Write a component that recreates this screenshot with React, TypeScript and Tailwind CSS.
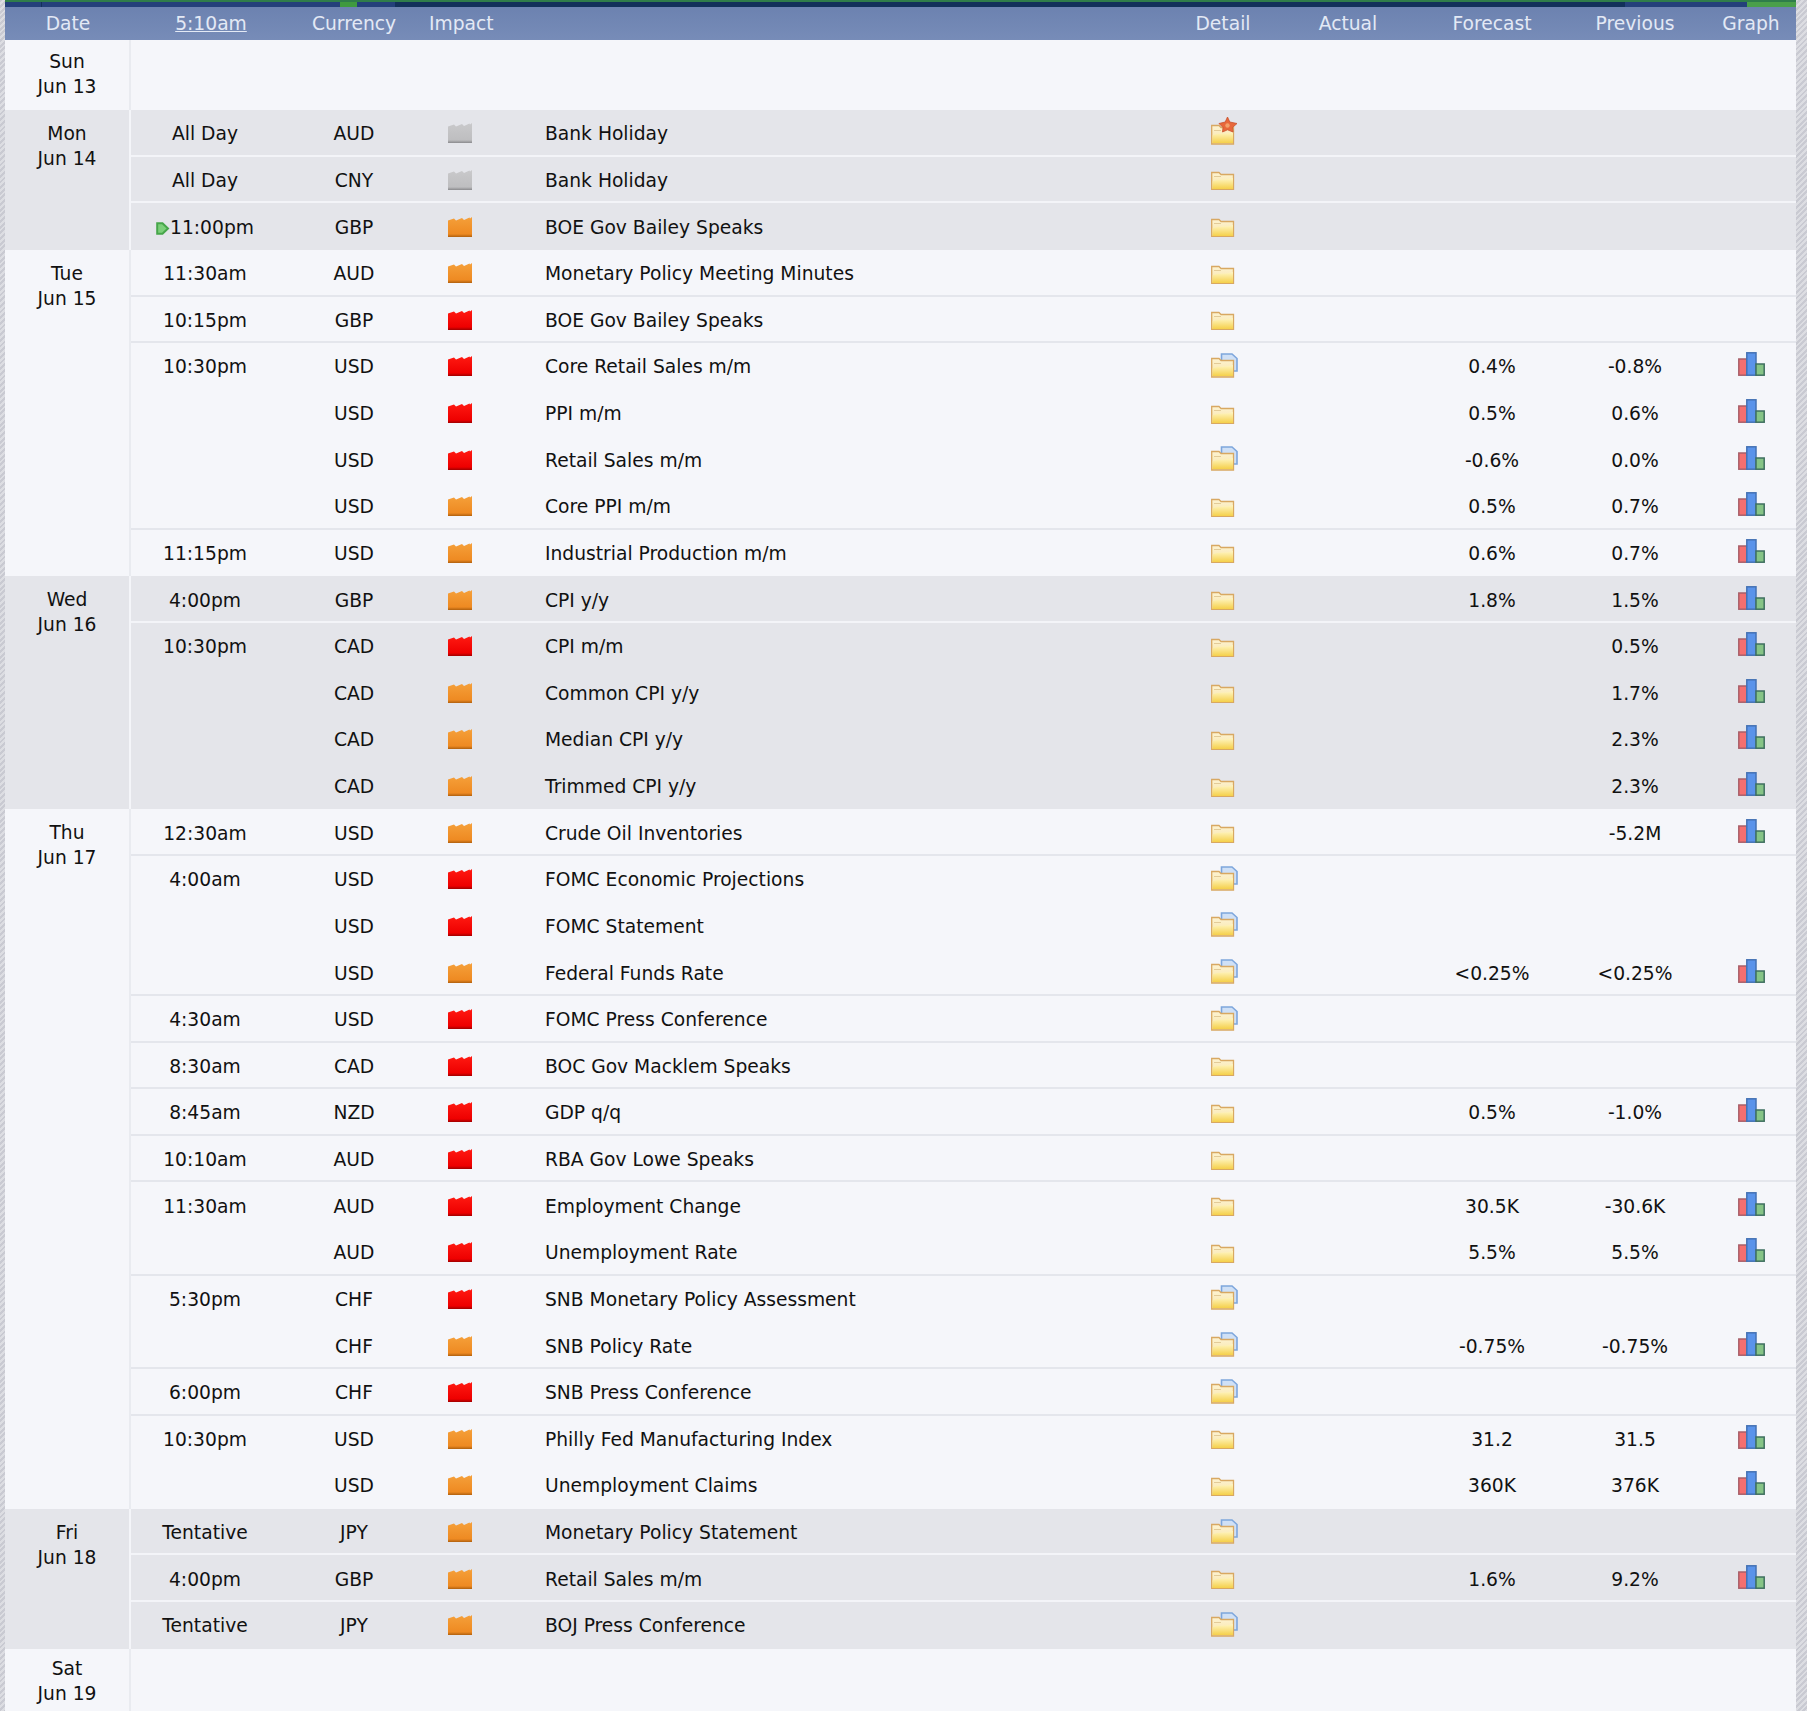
import React from 'react';

type Row = {
  time?: string;
  cur: string;
  impact: 'gray' | 'orange' | 'red';
  event: string;
  detail?: 'plain' | 'doc' | 'star';
  forecast?: string;
  previous?: string;
  graph?: boolean;
  next?: boolean;
};

type Day = { name: string; date: string; shaded: boolean; rows: Row[] };

const days: Day[] = [
  { name: 'Sun', date: 'Jun 13', shaded: false, rows: [] },
  {
    name: 'Mon',
    date: 'Jun 14',
    shaded: true,
    rows: [
      { time: 'All Day', cur: 'AUD', impact: 'gray', event: 'Bank Holiday', detail: 'star' },
      { time: 'All Day', cur: 'CNY', impact: 'gray', event: 'Bank Holiday' },
      { time: '11:00pm', next: true, cur: 'GBP', impact: 'orange', event: 'BOE Gov Bailey Speaks' },
    ],
  },
  {
    name: 'Tue',
    date: 'Jun 15',
    shaded: false,
    rows: [
      { time: '11:30am', cur: 'AUD', impact: 'orange', event: 'Monetary Policy Meeting Minutes' },
      { time: '10:15pm', cur: 'GBP', impact: 'red', event: 'BOE Gov Bailey Speaks' },
      { time: '10:30pm', cur: 'USD', impact: 'red', event: 'Core Retail Sales m/m', detail: 'doc', forecast: '0.4%', previous: '-0.8%', graph: true },
      { cur: 'USD', impact: 'red', event: 'PPI m/m', forecast: '0.5%', previous: '0.6%', graph: true },
      { cur: 'USD', impact: 'red', event: 'Retail Sales m/m', detail: 'doc', forecast: '-0.6%', previous: '0.0%', graph: true },
      { cur: 'USD', impact: 'orange', event: 'Core PPI m/m', forecast: '0.5%', previous: '0.7%', graph: true },
      { time: '11:15pm', cur: 'USD', impact: 'orange', event: 'Industrial Production m/m', forecast: '0.6%', previous: '0.7%', graph: true },
    ],
  },
  {
    name: 'Wed',
    date: 'Jun 16',
    shaded: true,
    rows: [
      { time: '4:00pm', cur: 'GBP', impact: 'orange', event: 'CPI y/y', forecast: '1.8%', previous: '1.5%', graph: true },
      { time: '10:30pm', cur: 'CAD', impact: 'red', event: 'CPI m/m', previous: '0.5%', graph: true },
      { cur: 'CAD', impact: 'orange', event: 'Common CPI y/y', previous: '1.7%', graph: true },
      { cur: 'CAD', impact: 'orange', event: 'Median CPI y/y', previous: '2.3%', graph: true },
      { cur: 'CAD', impact: 'orange', event: 'Trimmed CPI y/y', previous: '2.3%', graph: true },
    ],
  },
  {
    name: 'Thu',
    date: 'Jun 17',
    shaded: false,
    rows: [
      { time: '12:30am', cur: 'USD', impact: 'orange', event: 'Crude Oil Inventories', previous: '-5.2M', graph: true },
      { time: '4:00am', cur: 'USD', impact: 'red', event: 'FOMC Economic Projections', detail: 'doc' },
      { cur: 'USD', impact: 'red', event: 'FOMC Statement', detail: 'doc' },
      { cur: 'USD', impact: 'orange', event: 'Federal Funds Rate', detail: 'doc', forecast: '<0.25%', previous: '<0.25%', graph: true },
      { time: '4:30am', cur: 'USD', impact: 'red', event: 'FOMC Press Conference', detail: 'doc' },
      { time: '8:30am', cur: 'CAD', impact: 'red', event: 'BOC Gov Macklem Speaks' },
      { time: '8:45am', cur: 'NZD', impact: 'red', event: 'GDP q/q', forecast: '0.5%', previous: '-1.0%', graph: true },
      { time: '10:10am', cur: 'AUD', impact: 'red', event: 'RBA Gov Lowe Speaks' },
      { time: '11:30am', cur: 'AUD', impact: 'red', event: 'Employment Change', forecast: '30.5K', previous: '-30.6K', graph: true },
      { cur: 'AUD', impact: 'red', event: 'Unemployment Rate', forecast: '5.5%', previous: '5.5%', graph: true },
      { time: '5:30pm', cur: 'CHF', impact: 'red', event: 'SNB Monetary Policy Assessment', detail: 'doc' },
      { cur: 'CHF', impact: 'orange', event: 'SNB Policy Rate', detail: 'doc', forecast: '-0.75%', previous: '-0.75%', graph: true },
      { time: '6:00pm', cur: 'CHF', impact: 'red', event: 'SNB Press Conference', detail: 'doc' },
      { time: '10:30pm', cur: 'USD', impact: 'orange', event: 'Philly Fed Manufacturing Index', forecast: '31.2', previous: '31.5', graph: true },
      { cur: 'USD', impact: 'orange', event: 'Unemployment Claims', forecast: '360K', previous: '376K', graph: true },
    ],
  },
  {
    name: 'Fri',
    date: 'Jun 18',
    shaded: true,
    rows: [
      { time: 'Tentative', cur: 'JPY', impact: 'orange', event: 'Monetary Policy Statement', detail: 'doc' },
      { time: '4:00pm', cur: 'GBP', impact: 'orange', event: 'Retail Sales m/m', forecast: '1.6%', previous: '9.2%', graph: true },
      { time: 'Tentative', cur: 'JPY', impact: 'orange', event: 'BOJ Press Conference', detail: 'doc' },
    ],
  },
  { name: 'Sat', date: 'Jun 19', shaded: false, rows: [] },
];

const impactColors = {
  gray: ['#c9c9cb', '#bebec0', '#8a8a8d'],
  orange: ['#f5a03a', '#ee8a22', '#b0600e'],
  red: ['#ff1a12', '#ee0000', '#a00000'],
};

const Impact = ({ level }: { level: Row['impact'] }) => {
  const [top, mid, bottom] = impactColors[level];
  return (
    <svg width="24" height="20" viewBox="0 0 24 20" className="block">
      <defs>
        <linearGradient id={`impact-${level}`} x1="0" y1="0" x2="0" y2="1">
          <stop offset="0" stopColor={top} />
          <stop offset="0.85" stopColor={mid} />
          <stop offset="1" stopColor={bottom} />
        </linearGradient>
      </defs>
      <path
        d="M0 20V3.500L6 1.500 8 3.500 14 1 16 3 21.500 .5 22 1.500 24 0V20Z"
        fill={`url(#impact-${level})`}
      />
    </svg>
  );
};

const Folder = ({ kind }: { kind: 'plain' | 'doc' | 'star' }) => {
  const tall = kind !== 'plain';
  return (
    <svg width="27" height="25" viewBox="0 0 27 25" className="block overflow-visible">
      <defs>
        <linearGradient id="folder-back" x1="0" y1="0" x2="0" y2="1">
          <stop offset="0" stopColor="#fdf3d2" />
          <stop offset="1" stopColor="#f8e3a4" />
        </linearGradient>
        <linearGradient id="folder-front" x1="0" y1="0" x2="0" y2="1">
          <stop offset="0" stopColor="#fff6c4" />
          <stop offset="1" stopColor="#f5d04a" />
        </linearGradient>
      </defs>
      {kind === 'doc' && (
        <path d="M10.500 1H21L26 5.500V18H10.500Z" fill="#cfe0f6" stroke="#7da6dc" strokeWidth="1.600" />
      )}
      <path
        d={tall ? 'M.7 5.500H8L10 7.500H22.500V24H.7Z' : 'M.7 6.500H8L10 8.500H22.500V23.300H.7Z'}
        fill="url(#folder-back)"
        stroke="#d8a862"
        strokeWidth="1.300"
      />
      <path d="M1.500 15.500C8 12 15 15 22 12V23H1.500Z" fill="url(#folder-front)" />
      <path d="M3 10.500H10" stroke="#e2cb98" strokeWidth="1" />
      {kind === 'star' && (
        <g transform="translate(0 -3)">
          <path
            d="M16.500 0L18.800 5 26 6.500 21.500 10.500 22 15 16.500 12.800 11.500 15 12 10.500 8 6.500 14.200 5Z"
            fill="#e8673a"
            stroke="#c9502c"
            strokeWidth=".8"
          />
          <circle cx="16.500" cy="8.500" r="2.200" fill="#f3a06a" />
        </g>
      )}
    </svg>
  );
};

const Graph = () => (
  <svg width="27" height="24" viewBox="0 0 27 24" className="block">
    <rect x=".8" y="7" width="8" height="16.200" fill="#f56f6f" stroke="#a8606a" strokeWidth="1.500" />
    <rect x="8.800" y=".8" width="9.200" height="22.400" fill="#5a93ea" stroke="#4472b4" strokeWidth="1.500" />
    <rect x="18" y="12" width="8.200" height="11.200" fill="#86c486" stroke="#3f7060" strokeWidth="1.500" />
  </svg>
);

const Arrow = () => (
  <svg width="14" height="13" viewBox="0 0 14 13" className="inline-block align-[-1px]">
    <path d="M1.200 1.200H6.500L12 6.500 6.500 11.800H1.200Z" fill="#7ccf7a" stroke="#46a64a" strokeWidth="2" />
  </svg>
);

const EventRow = ({ row, last, shaded }: { row: Row; last: boolean; shaded: boolean }) => (
  <div
    className={`grid grid-cols-[148px_150px_116px_623px_110px_140px_148px_138px_92px] items-center h-[46.64px] ${
      last ? '' : shaded ? 'shadow-[inset_0_-2px_0_#f3f4f8]' : 'shadow-[inset_0_-2px_0_#e4e6ec]'
    }`}
  >
    <div className="text-center whitespace-nowrap pt-[2px]">
      {row.next && <Arrow />}
      {row.time}
    </div>
    <div className="text-center pt-[2px]">{row.cur}</div>
    <div className="pl-[19px]">
      <Impact level={row.impact} />
    </div>
    <div className="whitespace-nowrap pt-[2px]">{row.event}</div>
    <div className="flex justify-center pl-[3px] -mt-[2px]">
      <Folder kind={row.detail ?? 'plain'} />
    </div>
    <div />
    <div className="text-center pt-[2px]">{row.forecast}</div>
    <div className="text-center pt-[2px]">{row.previous}</div>
    <div className="flex justify-center pl-[2px] -mt-[4px]">{row.graph && <Graph />}</div>
  </div>
);

const DayBlock = ({ day }: { day: Day }) => {
  const rows = day.rows;
  const topPad = rows.length > 0 ? 'pt-[11px]' : day.name === 'Sat' ? 'pt-[7px]' : 'pt-[9px]';
  return (
    <div className={`flex ${day.shaded ? 'bg-[#e4e5ea]' : 'bg-[#f5f6fa]'}`}>
      <div
        className={`w-[126px] shrink-0 text-center leading-[25px] border-r-2 ${topPad} ${
          day.shaded ? 'border-[#f4f5f9]' : 'border-[#e9ebf0]'
        }`}
      >
        <div>{day.name}</div>
        <div>{day.date}</div>
      </div>
      <div className="flex-1">
        {rows.length === 0 && <div className="h-[70px]" />}
        {rows.map((row, i) => (
          <EventRow
            key={i}
            row={row}
            shaded={day.shaded}
            last={i === rows.length - 1 || !rows[i + 1].time}
          />
        ))}
      </div>
    </div>
  );
};

export default function App() {
  return (
    <div className="h-[1711px] overflow-hidden flex text-[18.700px] text-[#111] font-['DejaVu_Sans',sans-serif] bg-[repeating-linear-gradient(135deg,#c9cad2_0px,#c9cad2_2px,#dcdde2_2px,#dcdde2_4px)]">
      <div className="w-[5px] shrink-0" />
      <div className="w-[1791px] shrink-0">
        {/* top strip left over from the page above */}
        <div className="h-[7px] bg-[#12305a] border-t-2 border-[#2f7d4a] flex">
          <div className="w-[37px] bg-[#24407a] border-r border-[#12305a]" />
          <div className="w-[298px] bg-[#24407a]" />
          <div className="w-[17px] bg-[#3f9a3f]" />
          <div className="w-[38px] bg-[#24407a]" />
          <div className="flex-1" />
          <div className="w-[122px] bg-[#24407a]" />
          <div className="w-[49px] bg-[#4a9f4a]" />
        </div>
        <div className="h-[33px] pt-[2px] grid grid-cols-[126px_148px_150px_116px_623px_110px_140px_148px_138px_92px] items-center bg-gradient-to-b from-[#6c82b0] to-[#778cb8] text-[#e3e9f5]">
          <div className="text-center">Date</div>
          <div className="text-center pl-3 underline">5:10am</div>
          <div className="text-center">Currency</div>
          <div>Impact</div>
          <div />
          <div className="text-center">Detail</div>
          <div className="text-center">Actual</div>
          <div className="text-center">Forecast</div>
          <div className="text-center">Previous</div>
          <div className="text-center pl-[2px]">Graph</div>
        </div>
        {days.map((day) => (
          <DayBlock key={day.name} day={day} />
        ))}
      </div>
    </div>
  );
}
